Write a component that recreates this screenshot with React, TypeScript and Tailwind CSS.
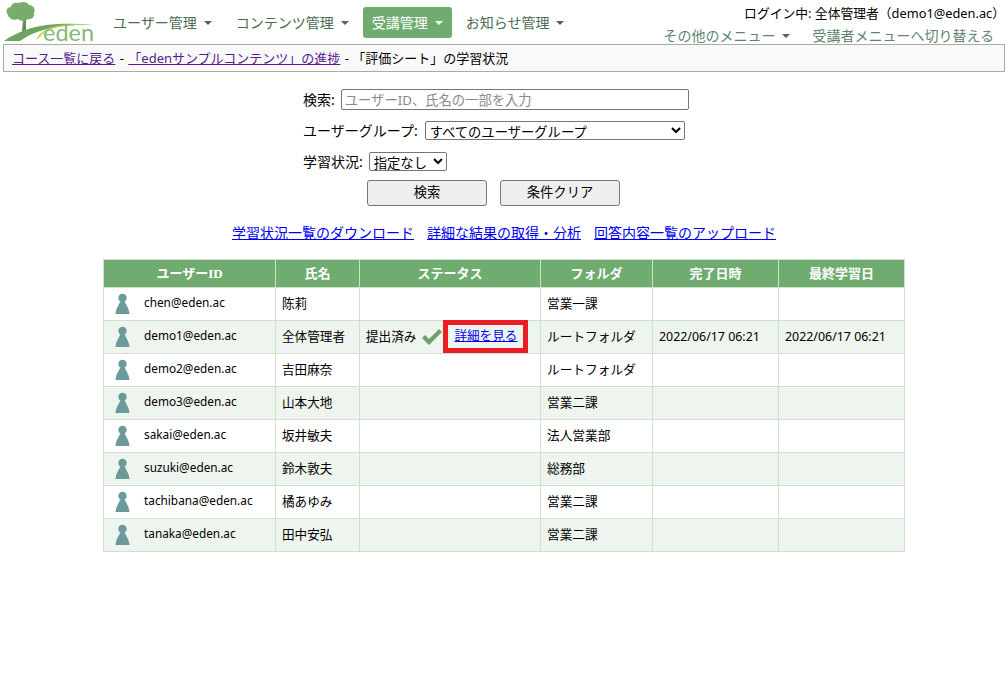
import React from "react";

const users = [
  { id: "chen@eden.ac", name: "陈莉", folder: "営業一課" },
  { id: "demo1@eden.ac", name: "全体管理者", folder: "ルートフォルダ", done: true },
  { id: "demo2@eden.ac", name: "吉田麻奈", folder: "ルートフォルダ" },
  { id: "demo3@eden.ac", name: "山本大地", folder: "営業二課" },
  { id: "sakai@eden.ac", name: "坂井敏夫", folder: "法人営業部" },
  { id: "suzuki@eden.ac", name: "鈴木敦夫", folder: "総務部" },
  { id: "tachibana@eden.ac", name: "橘あゆみ", folder: "営業二課" },
  { id: "tanaka@eden.ac", name: "田中安弘", folder: "営業二課" },
];

const Caret = () => (
  <span className="ml-[7px] inline-block align-middle border-x-[4px] border-t-[4px] border-x-transparent border-t-[#4d6b52]" />
);

const Logo = () => (
  <svg width="96" height="42" viewBox="0 0 96 42" className="shrink-0 overflow-visible">
    <path d="M21 31 L22 19 L17 15 L20 15 L23 17 L26 12 L27 13 L25 19 L25 29 Z" fill="#5f8f52" />
    <path d="M7 14 C4 10 6 6 10 6 C10 2 15 1 18 2 C21 0 27 1 28 4 C32 4 35 8 33 12 C34 16 30 19 27 18 C24 21 19 20 17 18 C13 20 8 18 7 14 Z" fill="#79ab6c" />
    <path d="M3 40 C14 32 30 26 45 24 C60 22 76 23 92 23 C74 24 58 25 46 28 C34 31 26 35 19 40 Z" fill="#6fa361" />
    <path d="M35 39 C37 33 43 28 56 25 C68 23 78 23 88 23 C72 24 60 25 51 28 C45 30 41 33 39 36 Z" fill="#c5d94f" />
    <text x="42" y="40" fontFamily="Lato, sans-serif" fontSize="23.5" fill="#86b878">eden</text>
  </svg>
);

const Person = () => (
  <svg width="15" height="22" viewBox="0 0 15 22" className="shrink-0">
    <circle cx="7.5" cy="5" r="4.2" fill="#6a9a9a" />
    <path d="M5 9 H10 C11 12 14 15 14.5 21 H0.5 C1 15 4 12 5 9 Z" fill="#6a9a9a" />
  </svg>
);

const Check = () => (
  <svg width="22" height="18" viewBox="0 0 22 18" className="shrink-0">
    <path d="M1 10 L4 7 L8 11 L18 1 L21 4 L8 17 Z" fill="#6f9f6b" />
  </svg>
);

export default function App() {
  return (
    <div className="w-[1008px] h-[680px] bg-white overflow-hidden text-black font-['Noto_Sans','Noto_Sans_CJK_JP',sans-serif]">
      <header className="h-[44px] flex">
        <div className="pl-[1px] pt-[1px]">
          <Logo />
        </div>
        <nav className="flex items-start pt-[7px] pl-[6px] text-[14px] text-[#4d6b52]">
          <a className="h-[31px] px-[10px] flex items-center">ユーザー管理<Caret /></a>
          <a className="h-[31px] pl-[14px] pr-[14px] flex items-center">コンテンツ管理<Caret /></a>
          <a className="h-[31px] px-[9px] flex items-center rounded-[3px] bg-[#70ab70] text-white">
            受講管理
            <span className="ml-[7px] border-x-[4px] border-t-[4px] border-x-transparent border-t-white" />
          </a>
          <a className="h-[31px] px-[14px] flex items-center">お知らせ管理<Caret /></a>
        </nav>
        <div className="ml-auto flex flex-col items-end">
          <p className="h-[23px] pt-[3px] pr-[3px] text-[12.8px] leading-[20px]">ログイン中: 全体管理者（demo1@eden.ac）</p>
          <div className="pt-[2px] pr-[14px] flex text-[14px] leading-[21px] text-[#5f8570]">
            <a className="flex items-center">その他のメニュー<Caret /></a>
            <a className="ml-[22px]">受講者メニューへ切り替える</a>
          </div>
        </div>
      </header>

      <div className="mx-[3px] h-[28px] border border-[#aaaaaa] bg-[#f9f9f9] pl-[8px] text-[13px] leading-[26px]">
        <a className="underline text-[#551a8b]">コース一覧に戻る</a>
        <span className="ml-[1px]"> - </span>
        <a className="ml-[1px] underline text-[#551a8b]">「edenサンプルコンテンツ」の進捗</a>
        <span className="ml-[1px]"> - 「評価シート」の学習状況</span>
      </div>

      <form className="w-[386px] ml-[303px] pt-[17px] text-[14px]">
        <div className="h-[21px] flex items-center">
          <label>検索:</label>
          <input
            placeholder="ユーザーID、氏名の一部を入力"
            className="ml-[6px] w-[348px] h-[21px] px-[3px] text-[13.3px] border border-[#767676] rounded-[2px] placeholder:text-[#8a8a8a]"
          />
        </div>
        <div className="mt-[10px] h-[21px] flex items-center">
          <label>ユーザーグループ:</label>
          <select className="ml-[7px] w-[260px] h-[19px] text-[13.3px] leading-[17px] border border-[#767676] rounded-[2px] appearance-auto">
            <option>すべてのユーザーグループ</option>
          </select>
        </div>
        <div className="mt-[10px] h-[21px] flex items-center">
          <label>学習状況:</label>
          <select className="ml-[6px] w-[78px] h-[19px] text-[13.3px] leading-[17px] border border-[#767676] rounded-[2px] appearance-auto">
            <option>指定なし</option>
          </select>
        </div>
        <div className="mt-[8px] ml-[64px] flex gap-[13px]">
          <button type="button" className="w-[120px] h-[26px] text-[13.3px] bg-[#efefef] border border-[#767676] rounded-[3px]">検索</button>
          <button type="button" className="w-[120px] h-[26px] text-[13.3px] bg-[#efefef] border border-[#767676] rounded-[3px]">条件クリア</button>
        </div>
      </form>

      <div className="mt-[16px] flex justify-center gap-[13px] text-[14px] leading-[21px] text-[#0000ee] underline">
        <a>学習状況一覧のダウンロード</a>
        <a>詳細な結果の取得・分析</a>
        <a>回答内容一覧のアップロード</a>
      </div>

      <table className="mt-[16px] ml-[103px] w-[801px] table-fixed border-collapse text-[12.6px]">
        <colgroup>
          <col className="w-[172px]" />
          <col className="w-[84px]" />
          <col className="w-[181px]" />
          <col className="w-[112px]" />
          <col className="w-[126px]" />
          <col className="w-[126px]" />
        </colgroup>
        <thead>
          <tr className="h-[28px] bg-[#70ab70] text-white font-['Liberation_Serif','Noto_Sans_CJK_JP',serif] text-[13px]">
            {["ユーザーID", "氏名", "ステータス", "フォルダ", "完了日時", "最終学習日"].map((h) => (
              <th key={h} className="border border-[#cfdfd0] font-bold">{h}</th>
            ))}
          </tr>
        </thead>
        <tbody>
          {users.map((u, i) => (
            <tr key={u.id} className={i % 2 ? "h-[33px] bg-[#eef4ee]" : "h-[33px] bg-white"}>
              <td className="border border-[#cfdfd0] pl-[11px]">
                <div className="flex items-center gap-[14px]">
                  <Person />
                  <span className="relative -top-[1px] text-[11.8px]">{u.id}</span>
                </div>
              </td>
              <td className="border border-[#cfdfd0] pl-[6px]">{u.name}</td>
              <td className="border border-[#cfdfd0] pl-[6px]">
                {u.done && (
                  <div className="h-[32px] flex items-center">
                    <span>提出済み</span>
                    <span className="ml-[5px]"><Check /></span>
                    <a className="self-end h-[33px] w-[85px] flex items-center justify-center border-[5px] border-[#ed1c24] text-[#0000ee] underline text-[12.6px]">詳細を見る</a>
                  </div>
                )}
              </td>
              <td className="border border-[#cfdfd0] pl-[6px] text-[12.7px]">{u.folder}</td>
              <td className="border border-[#cfdfd0] pl-[6px] text-[12.4px]">{u.done && "2022/06/17 06:21"}</td>
              <td className="border border-[#cfdfd0] pl-[6px] text-[12.4px]">{u.done && "2022/06/17 06:21"}</td>
            </tr>
          ))}
        </tbody>
      </table>
    </div>
  );
}
